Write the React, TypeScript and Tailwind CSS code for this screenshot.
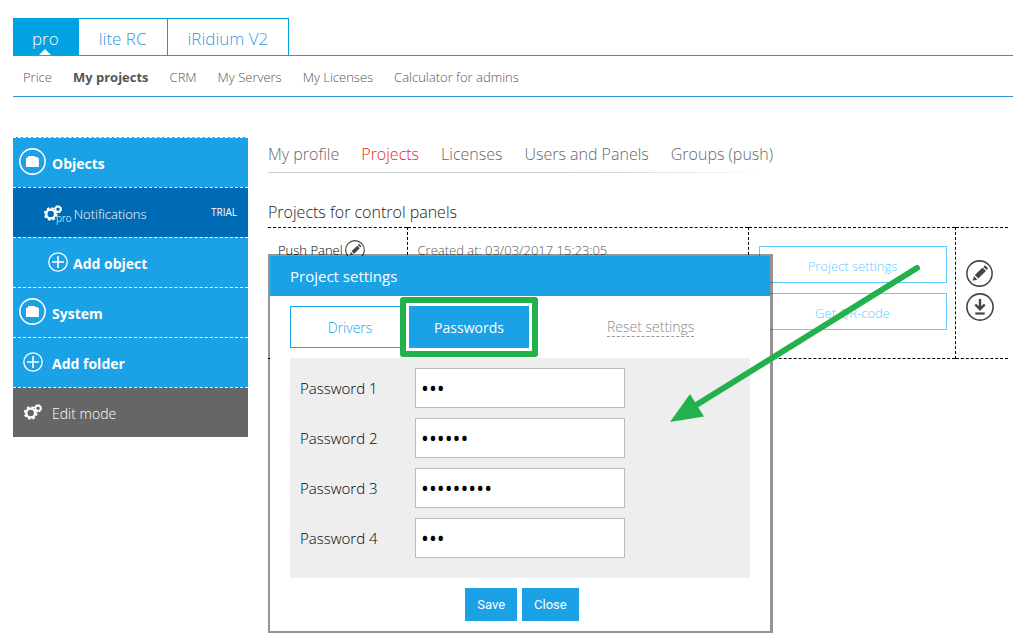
import { clsx } from "clsx";

const productTabs = [
  { label: "pro", active: true },
  { label: "lite RC", active: false },
  { label: "iRidium V2", active: false },
];

const accountLinks = ["Price", "My projects", "CRM", "My Servers", "My Licenses", "Calculator for admins"];
const sectionLinks = ["My profile", "Projects", "Licenses", "Users and Panels", "Groups (push)"];

const passwords = [
  { label: "Password 1", value: "123" },
  { label: "Password 2", value: "123456" },
  { label: "Password 3", value: "123456789" },
  { label: "Password 4", value: "321" },
];

function FolderIcon() {
  return (
    <svg className="size-[27px]" viewBox="0 0 28 28" fill="none">
      <circle cx="14" cy="14" r="13.1" stroke="#fff" strokeWidth="1.6" />
      <path d="M7.300 10.200H9l.6-2h6.800l.9 1.300h2.400v.9h.9v9.200H7.300z" fill="#fff" />
    </svg>
  );
}

function PlusIcon() {
  return (
    <svg className="size-5" viewBox="0 0 20 20" fill="none" stroke="#fff">
      <circle cx="10" cy="10" r="9.2" strokeWidth="1.3" />
      <path d="M10 4v12M4 10h12" strokeWidth="1.6" />
    </svg>
  );
}

function GearsIcon() {
  return (
    <svg className="h-4 w-[18px]" viewBox="0 0 18 16" fill="none" stroke="#fff">
      <circle cx="6.700" cy="9" r="4.400" strokeWidth="2.400" />
      <circle cx="6.700" cy="9" r="5.900" strokeWidth="1.800" strokeDasharray="2.6 2.03" />
      <circle cx="14" cy="4.3" r="2.600" strokeWidth="1.7" />
      <circle cx="14" cy="4.3" r="3.500" strokeWidth="1.2" strokeDasharray="1.5 1.25" />
    </svg>
  );
}

function PencilIcon({ className }: { className: string }) {
  return (
    <svg className={className} viewBox="0 0 28 28" fill="none">
      <circle cx="14" cy="14" r="13.1" fill="#fff" stroke="#444" strokeWidth="1.6" />
      <path d="M7 21.500l1.200-4.800 3.600 3.500zM9.200 15.600l8-7.700 3.500 3.600-7.900 7.600zM18 7l1.100-1a.9.9 0 0 1 1.200 0l2.100 2.100a.9.9 0 0 1 0 1.200l-1 1.100z" fill="#444" />
    </svg>
  );
}

function DownloadIcon() {
  return (
    <svg className="size-7" viewBox="0 0 28 28" fill="none" stroke="#444">
      <circle cx="14" cy="14" r="13.1" strokeWidth="1.6" />
      <path d="M14 6v9.500M9.300 11.500L14 16.200l4.700-4.700" strokeWidth="2.400" />
      <path d="M9.300 20.500h9.400" strokeWidth="2.200" />
    </svg>
  );
}

function Sidebar() {
  return (
    <nav className="w-[235px] shrink-0 text-sm text-white">
      <a href="#objects" className="flex h-[50px] items-center gap-1.5 border-t border-dashed border-white bg-[#1ba1e6] pb-0.5 pl-1.5 font-bold">
        <FolderIcon />
        <span className="pt-1">Objects</span>
      </a>
      <a href="#notifications" className="flex h-[50px] items-center border-t border-dashed border-white bg-[#006bb5] pr-[11px] pl-[31px] font-light">
        <GearsIcon />
        <span className="-ml-1.5 self-end pb-3 text-[10px]">pro</span>
        <span className="flex-1 pt-1 pl-0.5 text-[13px]">Notifications</span>
        <span className="text-[10px] font-normal">TRIAL</span>
      </a>
      <a href="#add-object" className="flex h-[50px] items-center gap-[5px] border-t border-dashed border-white bg-[#1ba1e6] pb-0.5 pl-[35px] font-bold">
        <PlusIcon />
        <span className="pt-1">Add object</span>
      </a>
      <a href="#system" className="flex h-[50px] items-center gap-1.5 border-t border-dashed border-white bg-[#1ba1e6] pb-0.5 pl-1.5 font-bold">
        <FolderIcon />
        <span className="pt-1">System</span>
      </a>
      <a href="#add-folder" className="flex h-[50px] items-center gap-[9px] border-t border-dashed border-white bg-[#1ba1e6] pb-0.5 pl-2.5 font-bold">
        <PlusIcon />
        <span className="pt-1">Add folder</span>
      </a>
      <a href="#edit" className="flex h-[50px] items-center gap-2.5 border-t border-dashed border-white bg-[#666] pb-0.5 pl-[11px] font-light">
        <GearsIcon />
        <span className="pt-1">Edit mode</span>
      </a>
    </nav>
  );
}

function ProjectsTable() {
  return (
    <table className="h-[132px] w-full table-fixed border-y border-dashed border-black">
      <tbody>
        <tr className="align-top">
          <td className="w-[139px] border-r border-dashed border-black pt-3 pl-2.5">
            <div className="flex items-center gap-0.5 text-[13px] leading-5 font-light whitespace-nowrap text-black">
              Push Panel
              <PencilIcon className="size-5" />
            </div>
          </td>
          <td className="border-r border-dashed border-black pt-3 pl-2.5 text-[13px] leading-5 font-light text-[#555]">
            Created at: 03/03/2017 15:23:05
          </td>
          <td className="w-[207px] border-r border-dashed border-black px-2.5 pt-[18px] pr-2">
            <div className="flex flex-col gap-2.5 text-[13px] font-light text-[#60cdff]">
              <button className="h-[37px] border border-[#60cdff] pt-1">Project settings</button>
              <button className="h-[37px] border border-[#60cdff] pt-1">Get QR-code</button>
            </div>
          </td>
          <td className="w-[53px] pt-8 pl-2.5">
            <div className="flex flex-col gap-1.5">
              <button aria-label="Edit project"><PencilIcon className="size-[27px]" /></button>
              <button aria-label="Download project"><DownloadIcon /></button>
            </div>
          </td>
        </tr>
      </tbody>
    </table>
  );
}

function SettingsDialog() {
  return (
    <div
      role="dialog"
      aria-label="Project settings"
      className="absolute top-[117px] left-0 w-[505px] border-2 border-r-3 border-black/42 bg-white bg-clip-padding pb-2.5"
    >
      <h2 className="h-10 bg-[#1ba1e6] pl-5 text-[15px] leading-10 text-white">Project settings</h2>
      <div className="flex px-5 pt-2.5 text-sm">
        <button className="h-[42px] w-[119px] border border-r-0 border-[#1ba1e6] pt-0.5 font-light text-[#1ba1e6]">Drivers</button>
        <button className="relative h-[42px] w-[120px] bg-[#1ba1e6] pt-0.5 text-white">
          Passwords
          <span className="absolute -inset-[9px] rounded-[3px] border-[6px] border-[#22b14c]" />
          <span className="absolute inset-y-0 -left-[3px] w-[3px] bg-white" />
        </button>
        <a href="#reset" className="ml-[78px] self-center border-b border-dashed border-[#999] leading-[18px] font-light text-[#888]">
          Reset settings
        </a>
      </div>
      <div className="mx-5 mt-2.5 flex flex-col gap-2.5 bg-[#eee] px-2.5 pt-2.5 pb-5">
        {passwords.map((p, i) => (
          <div key={p.label} className="flex items-center">
            <label htmlFor={`password-${i}`} className="w-[115px] text-[15px] font-light text-black">
              {p.label}
            </label>
            <input
              id={`password-${i}`}
              type="password"
              defaultValue={p.value}
              className="h-10 w-[210px] border border-[#bbb] bg-white px-[5px] text-[21px] text-black"
            />
          </div>
        ))}
      </div>
      <div className="mt-2.5 flex justify-center gap-[5px] pl-1 font-[Roboto,sans-serif] text-[13px] text-white">
        <button className="h-[33px] bg-[#1ba1e6] px-3">Save</button>
        <button className="h-[33px] bg-[#1ba1e6] px-3">Close</button>
      </div>
    </div>
  );
}

export default function App() {
  return (
    <div className="min-h-screen bg-white pt-[18px] pr-[3px] pl-[13px] font-['Open_Sans','Noto_Sans',sans-serif]">
      <header>
        <nav className="flex border-b border-[#2f94db] text-[17px] font-light">
          {productTabs.map((tab) => (
            <a
              key={tab.label}
              href="#product"
              className={clsx(
                "relative h-[37px] border-t border-r border-[#00a2e2] leading-10",
                tab.active ? "bg-[#00a2e2] px-[19px] text-white" : "px-5 text-[#2f9be0]"
              )}
            >
              {tab.label}
              {tab.active && (
                <span className="absolute bottom-0 left-1/2 -translate-x-1/2 border-x-[6px] border-b-[6px] border-x-transparent border-b-white" />
              )}
            </a>
          ))}
        </nav>
        <nav className="flex h-[41px] items-center gap-[21px] border-b border-[#2f94db] pl-2.5 text-[13px] font-light text-[#555]">
          {accountLinks.map((label) => (
            <a key={label} href="#account" className={clsx("pt-1", label === "My projects" && "font-bold")}>
              {label}
            </a>
          ))}
        </nav>
      </header>

      <div className="mt-10 flex gap-5">
        <Sidebar />
        <main className="relative min-w-0 flex-1 pr-[5px]">
          <nav className="flex h-[35px] gap-[22px] text-base leading-[34px] font-light whitespace-nowrap text-[#666]">
            {sectionLinks.map((label) => (
              <a key={label} href="#section" className={clsx(label === "Projects" && "text-[#ed1c24]")}>
                {label}
              </a>
            ))}
          </nav>
          <div className="h-px w-[500px] bg-linear-to-r from-[#ccc] from-60% to-white" />
          <h1 className="mt-6 h-[30px] text-base leading-[30px] font-light text-[#222]">Projects for control panels</h1>
          <ProjectsTable />
          <SettingsDialog />
          <svg className="pointer-events-none absolute top-[120px] left-[400px] h-[170px] w-[260px]" viewBox="0 0 260 170">
            <path d="M249 11L25 150" stroke="#22b14c" strokeWidth="6" strokeLinecap="round" />
            <path d="M2 165L22 137L36 159.500z" fill="#22b14c" />
          </svg>
        </main>
      </div>
    </div>
  );
}
